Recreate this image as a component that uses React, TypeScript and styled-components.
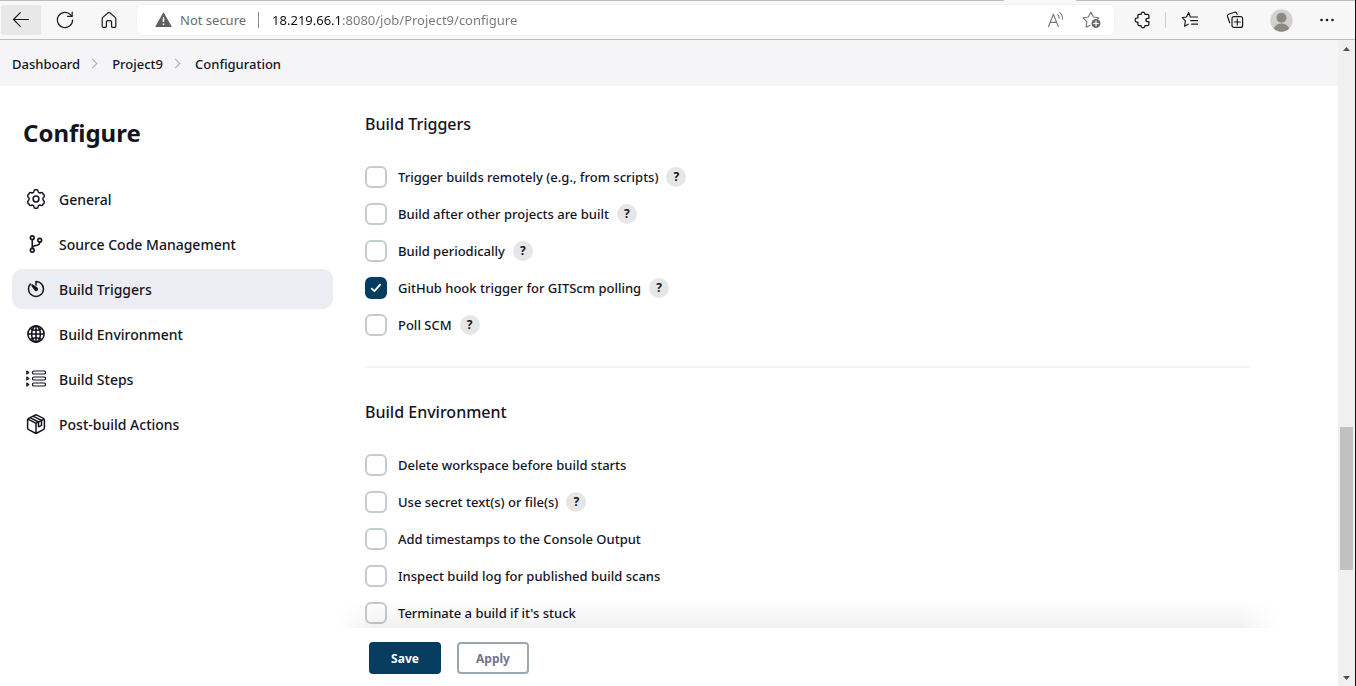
import React, { useState } from 'react';
import styled, { createGlobalStyle, css } from 'styled-components';
import { IoGitBranchOutline, IoGlobeOutline, IoTimerOutline } from 'react-icons/io5';

const ink = '#14141f';
const navy = '#063c5f';

const GlobalStyle = createGlobalStyle`
  *, *::before, *::after { box-sizing: border-box; }
  body { margin: 0; background: #fff; color: ${ink}; font-family: 'Noto Sans', 'Open Sans', sans-serif; }
  button, input { font-family: inherit; }
  h1, h2, ul, ol { margin: 0; padding: 0; }
  ul, ol { list-style: none; }
`;

const Window = styled.div`
  display: flex;
  flex-direction: column;
  height: 100vh;
  border-right: 1px solid #111;
  overflow: hidden;
`;

/* ---------- browser toolbar ---------- */

const TabEdge = styled.div`
  flex: none;
  display: flex;
  justify-content: flex-end;
  height: 1px;
  padding-right: 279px;
  background: #bdbdbd;
`;

const ActiveTab = styled.div`
  width: 72px;
  background: #f7f7f7;
`;

const Toolbar = styled.header`
  flex: none;
  display: flex;
  align-items: center;
  height: 39px;
  padding: 0 8px 0 1px;
  background: #f7f7f7;
  border-bottom: 1px solid #bdbdbd;
`;

const ToolGroup = styled.div<{ $gap: number }>`
  display: flex;
  align-items: center;
  gap: ${(p) => p.$gap}px;
`;

const ToolButton = styled.button<{ $active?: boolean; $narrow?: boolean }>`
  display: grid;
  place-items: center;
  width: ${(p) => (p.$narrow ? 36 : 40)}px;
  height: 30px;
  padding: 0;
  border: 0;
  border-radius: 3px;
  color: #1b1b1b;
  background: ${(p) => (p.$active ? '#e8e8e8' : 'transparent')};
  ${(p) => p.$narrow && css`color: #767676;`}
`;

const ToolDivider = styled.span`
  width: 1px;
  height: 16px;
  margin: 0 3px;
  background: #cfcfcf;
`;

const AddressBar = styled.div`
  flex: 1;
  display: flex;
  align-items: center;
  height: 30px;
  margin: 0 8px;
  padding: 0 4px 0 18px;
  border-radius: 5px;
  background: #fff;
  box-shadow: 0 0 2px rgba(0, 0, 0, 0.08);
`;

const Security = styled.span`
  margin-left: 8px;
  padding-right: 12px;
  border-right: 1px solid #8a8a8a;
  font-size: 13px;
  line-height: 16px;
  color: #6b6b6b;
`;

const Address = styled.input`
  flex: 1;
  min-width: 0;
  padding: 0 0 0 13px;
  border: 0;
  outline: 0;
  font-size: 13px;
  line-height: 20px;
  color: transparent;
  background: linear-gradient(90deg, #111 0 83px, #767676 83px);
  background-clip: text;
  -webkit-background-clip: text;
`;

/* ---------- page ---------- */

const Viewport = styled.div`
  flex: 1;
  display: flex;
  min-height: 0;
`;

const Page = styled.div`
  flex: 1;
  display: flex;
  flex-direction: column;
  min-width: 0;
`;

const Breadcrumbs = styled.nav`
  flex: none;
  padding: 0 12px;
  background: #f5f5f8;

  ol { display: flex; align-items: center; height: 46px; }
  li { display: flex; align-items: center; }
  li + li::before {
    content: '';
    width: 7px;
    height: 7px;
    margin: 0 16px 0 9px;
    border: solid #a9a9bb;
    border-width: 1px 1px 0 0;
    transform: rotate(45deg);
  }
`;

const Crumb = styled.a`
  padding-top: 2px;
  font-size: 13px;
  line-height: 20px;
  font-weight: 500;
  color: ${ink};
  text-decoration: none;
`;

const Body = styled.div`
  flex: 1;
  display: flex;
  min-height: 0;
`;

const Sidebar = styled.aside`
  flex: none;
  width: 333px;
  padding: 29px 0 0 12px;
`;

const Title = styled.h1`
  margin: 0 0 28px 11px;
  font-size: 24px;
  line-height: 36px;
  font-weight: 700;
`;

const Tasks = styled.ul`
  display: flex;
  flex-direction: column;
  gap: 5px;
`;

const Task = styled.a<{ $active?: boolean }>`
  display: flex;
  align-items: center;
  gap: 13px;
  height: 40px;
  padding-left: 14px;
  border-radius: 10px;
  font-size: 14px;
  line-height: 20px;
  font-weight: 500;
  color: ${ink};
  text-decoration: none;
  background: ${(p) => (p.$active ? '#ecedf3' : 'transparent')};

  svg[viewBox='0 0 512 512'] * { stroke-width: 40px; }
`;

const TaskName = styled.span`
  padding-top: 2px;
`;

const Main = styled.main`
  flex: 1;
  display: flex;
  flex-direction: column;
  min-width: 0;
  padding: 0 88px 0 32px;
`;

const FormArea = styled.div`
  flex: 1;
  min-height: 0;
  overflow: hidden;
`;

const Section = styled.section`
  padding: 25px 0 30px;
  & + & { border-top: 2px solid #f3f3f8; padding-top: 31px; }
`;

const SectionTitle = styled.h2`
  margin-bottom: 29px;
  font-size: 16px;
  line-height: 26px;
  font-weight: 500;
`;

const Options = styled.ul`
  display: flex;
  flex-direction: column;
  gap: 15px;
`;

const Option = styled.li`
  display: flex;
  align-items: center;
  gap: 8px;
  height: 22px;
`;

const OptionLabel = styled.label`
  display: flex;
  align-items: center;
  gap: 11px;
  font-size: 13px;
  line-height: 20px;
  font-weight: 500;
`;

const CheckCell = styled.span`
  display: grid;
  place-items: center;
  > * { grid-area: 1 / 1; }
  svg { pointer-events: none; }
`;

const Checkbox = styled.input`
  appearance: none;
  width: 22px;
  height: 22px;
  margin: 0;
  border: 2px solid #c3ccd1;
  border-radius: 6px;
  background: #fff;
  &:checked { border-color: ${navy}; background: ${navy}; }
`;

const Help = styled.button`
  width: 20px;
  height: 20px;
  padding: 0;
  border: 0;
  border-radius: 50%;
  font-size: 12px;
  line-height: 20px;
  font-weight: 700;
  color: ${ink};
  background: #e6e6e6;
`;

const ActionBar = styled.div`
  position: relative;
  flex: none;
  display: flex;
  gap: 16px;
  padding: 14px 4px 12px;
  background: #fff;

  &::before {
    content: '';
    position: absolute;
    left: -28px;
    right: -28px;
    bottom: 100%;
    height: 28px;
    background: linear-gradient(to top, rgba(0, 0, 0, 0.06), transparent);
    mask-image: linear-gradient(to right, transparent, #000 40px, #000 calc(100% - 40px), transparent);
    pointer-events: none;
  }
`;

const ActionButton = styled.button<{ $primary?: boolean }>`
  width: 72px;
  height: 32px;
  padding: 2px 0 0;
  border: 2px solid ${(p) => (p.$primary ? navy : '#9aa7b1')};
  border-radius: 4px;
  font-size: 12px;
  line-height: 20px;
  font-weight: 700;
  color: ${(p) => (p.$primary ? '#fff' : '#74748c')};
  background: ${(p) => (p.$primary ? navy : '#fff')};
`;

/* ---------- scrollbar ---------- */

const ScrollTrack = styled.div`
  flex: none;
  display: flex;
  flex-direction: column;
  align-items: center;
  width: 17px;
  background: #f0f0f0;
`;

const ScrollArrow = styled.button`
  display: grid;
  place-items: center;
  width: 17px;
  height: 17px;
  padding: 0;
  border: 0;
  background: transparent;
`;

const ScrollLane = styled.div`
  flex: 1;
  display: flex;
  flex-direction: column;
  width: 13px;
  &::before { content: ''; flex: 370; }
  &::after { content: ''; flex: 99; }
`;

const ScrollThumb = styled.div`
  flex: 143;
  background: #c1c1c1;
`;

/* ---------- icons ---------- */

const line = { fill: 'none', stroke: 'currentColor', strokeLinecap: 'round', strokeLinejoin: 'round' } as const;

const BackIcon = () => (
  <svg width="18" height="18" viewBox="0 0 18 18" {...line} strokeWidth="1.2"><path d="M16.500 8.500H1.500M8.300 1.700 1.500 8.500l6.800 6.800" /></svg>
);
const ReloadIcon = () => (
  <svg width="18" height="18" viewBox="0 0 18 18" {...line} strokeWidth="1.2"><path d="M16.600 9A7.600 7.600 0 1 1 14.600 3.800L16.200 5.400M16.200 1v4.400h-4.600" /></svg>
);
const HomeIcon = () => (
  <svg width="18" height="18" viewBox="0 0 18 18" {...line} strokeWidth="1.2">
    <path d="M2.200 7.600c0-.5.2-.9.6-1.200L8.200 1.700c.5-.4 1.100-.4 1.600 0l5.400 4.700c.4.300.6.700.6 1.200v7.600c0 .7-.5 1.200-1.200 1.200h-2.200c-.5 0-.8-.3-.8-.8V11c0-.9-.6-1.400-1.400-1.400H7.800c-.8 0-1.400.5-1.400 1.400v4.600c0 .5-.3.8-.8.8H3.400c-.7 0-1.200-.5-1.200-1.200z" />
  </svg>
);
const WarningIcon = () => (
  <svg width="17" height="16" viewBox="0 0 17 16">
    <path d="M8.500 1.200 15.900 14.400H1.100z" fill="#606060" stroke="#606060" strokeWidth="1.2" strokeLinejoin="round" />
    <path d="M8.500 5v5M8.500 11.400v1.600" stroke="#fff" strokeWidth="1.5" />
  </svg>
);
const ReadAloudIcon = () => (
  <svg width="18" height="18" viewBox="0 0 18 18" {...line} strokeWidth="1.1">
    <path d="M1.500 15.500 6.400 3.200l4.900 12.300M3.100 11.400h6.600M10.700 3.600c1 .9 1.500 2.200 1.400 3.600M12.800 1.600c1.900 1.600 2.900 4 2.700 6.600" />
  </svg>
);
const StarAddIcon = () => (
  <svg width="20" height="20" viewBox="0 0 20 20" {...line} strokeWidth="1.1">
    <path d="M8 15.200l-3.900 2 .8-5.500L1 7.800l5.400-.8L8.900 2l2.500 5 5.400.8-1.200 1.200" />
    <circle cx="14" cy="13.500" r="4.500" fill="#6b6b6b" stroke="none" />
    <path d="M14 11.200v4.600M11.700 13.500h4.600" stroke="#fff" strokeWidth="1.2" />
  </svg>
);
const PuzzleIcon = () => (
  <svg width="18" height="18" viewBox="0 0 18 18" {...line} strokeWidth="1.3">
    <path d="M6.200 3.400h1.900c-.1-1.300.7-2.200 1.900-2.200s2 .9 1.900 2.200h2.700c.8 0 1.300.5 1.300 1.300v2.600h-1c-1.200 0-2 .7-2 1.700s.8 1.700 2 1.700h1v2.600c0 .8-.5 1.300-1.300 1.300h-2.700c.1 1.300-.7 2.200-1.900 2.200s-2-.9-1.900-2.200H6.200c-.8 0-1.300-.5-1.300-1.300v-2.200C3.300 11.300 2.200 10.400 2.200 9s1.100-2.300 2.700-2.100V4.700c0-.8.5-1.300 1.300-1.300z" />
  </svg>
);
const FavoritesIcon = () => (
  <svg width="18" height="18" viewBox="0 0 18 18" {...line} strokeWidth="1.2">
    <path d="M11.700 6h-1.300L8.600 1.600 6.500 6l-4.300.7 3.200 3.200-.8 5.300 3.600-2M11.600 6h6M10.600 9.600h7M11.600 13.200h6" />
  </svg>
);
const CollectionsIcon = () => (
  <svg width="18" height="18" viewBox="0 0 18 18" {...line} strokeWidth="1.2">
    <path d="M3.700 11.800 1.500 5.500C1.200 4.500 1.600 3.600 2.600 3.200L8.400 1.300c1-.3 2 .1 2.300 1.100l.4 1" />
    <rect x="6" y="5.600" width="10.600" height="10.800" rx="2" />
    <path d="M11.300 8v6M8.300 11h6" />
  </svg>
);
const AvatarIcon = () => (
  <svg width="23" height="23" viewBox="0 0 23 23">
    <circle cx="11.500" cy="11.500" r="11.200" fill="#d3d1ce" />
    <circle cx="11.500" cy="8.800" r="5" fill="#8c8984" />
    <path d="M3.700 19.500a8.600 8.600 0 0 1 15.600 0 11.200 11.200 0 0 1-15.600 0" fill="#8c8984" />
  </svg>
);
const MoreIcon = () => (
  <svg width="16" height="4" viewBox="0 0 16 4" fill="currentColor"><circle cx="2.500" cy="2" r="1.300" /><circle cx="8" cy="2" r="1.300" /><circle cx="13.500" cy="2" r="1.300" /></svg>
);

const GearIcon = () => (
  <svg width="20" height="20" viewBox="0 0 20 20" {...line} strokeWidth="1.5">
    <circle cx="10" cy="10" r="2.900" />
    <path d="M7.900 2.300C8 1.300 8.500.8 9.300.8h1.400c.8 0 1.300.5 1.400 1.500.1 1.200 1.300 1.900 2.400 1.400 1-.4 1.800-.2 2.200.5l1.500 2.100c.4.700.2 1.400-.6 2-1 .7-1 2.700 0 3.400.8.600 1 1.300.6 2l-1.500 2.100c-.4.700-1.200.9-2.200.5-1.100-.5-2.300.2-2.400 1.400-.1 1-.6 1.500-1.400 1.500H9.300c-.8 0-1.300-.5-1.400-1.500-.1-1.200-1.300-1.900-2.400-1.400-1 .4-1.800.2-2.200-.5l-1.500-2.100c-.4-.7-.2-1.400.6-2 1-.7 1-2.700 0-3.400-.8-.6-1-1.300-.6-2l1.500-2.100c.4-.7 1.200-.9 2.200-.5 1.100.5 2.300-.2 2.400-1.400z" />
  </svg>
);
const StepsIcon = () => (
  <svg width="20" height="20" viewBox="0 0 20 20" {...line} strokeWidth="1.2">
    {[3.5, 9.5, 15.5].map((y) => (
      <g key={y}>
        <path d={`M.8 ${y - 1.5} 2.800 ${y} .8 ${y + 1.5}z`} />
        <rect x="6.500" y={y - 1.5} width="13" height="3" rx="1.300" />
      </g>
    ))}
  </svg>
);
const PackageIcon = () => (
  <svg width="20" height="20" viewBox="0 0 20 20" {...line} strokeWidth="1.5">
    <path d="M9.100 1.100a2 2 0 0 1 1.800 0l6.500 3.300c.6.300 1 .8 1 1.500v8.200c0 .7-.4 1.200-1 1.500l-6.500 3.400a2 2 0 0 1-1.800 0l-6.500-3.400c-.6-.3-1-.8-1-1.500V5.900c0-.7.4-1.200 1-1.500zM2 5.200l8 4.100 8-4.100M10 9.300v9.700" />
    <path d="M4.500 3.900l8 4.100v4.800l3-1.500V6.400l-8-4.100" />
  </svg>
);
const CheckIcon = () => (
  <svg width="12" height="12" viewBox="0 0 12 12" fill="none" stroke="#fff" strokeWidth="1.8" strokeLinecap="round" strokeLinejoin="round"><path d="M1.700 6.600 4.400 9.200 10.200 2.600" /></svg>
);

/* ---------- data ---------- */

const tasks = [
  { name: 'General', icon: <GearIcon /> },
  { name: 'Source Code Management', icon: <IoGitBranchOutline size={20} /> },
  { name: 'Build Triggers', icon: <IoTimerOutline size={20} />, active: true },
  { name: 'Build Environment', icon: <IoGlobeOutline size={20} /> },
  { name: 'Build Steps', icon: <StepsIcon /> },
  { name: 'Post-build Actions', icon: <PackageIcon /> },
];

type OptionData = { label: string; help?: boolean; checked?: boolean };

const sections: { title: string; options: OptionData[] }[] = [
  {
    title: 'Build Triggers',
    options: [
      { label: 'Trigger builds remotely (e.g., from scripts)', help: true },
      { label: 'Build after other projects are built', help: true },
      { label: 'Build periodically', help: true },
      { label: 'GitHub hook trigger for GITScm polling', help: true, checked: true },
      { label: 'Poll SCM', help: true },
    ],
  },
  {
    title: 'Build Environment',
    options: [
      { label: 'Delete workspace before build starts' },
      { label: 'Use secret text(s) or file(s)', help: true },
      { label: 'Add timestamps to the Console Output' },
      { label: 'Inspect build log for published build scans' },
      { label: "Terminate a build if it's stuck" },
    ],
  },
];

function OptionRow({ label, help, checked = false }: OptionData) {
  const [on, setOn] = useState(checked);
  return (
    <Option>
      <OptionLabel>
        <CheckCell>
          <Checkbox type="checkbox" checked={on} onChange={(e) => setOn(e.target.checked)} />
          {on && <CheckIcon />}
        </CheckCell>
        {label}
      </OptionLabel>
      {help && <Help type="button" aria-label={`Help for ${label}`}>?</Help>}
    </Option>
  );
}

export default function App() {
  return (
    <Window>
      <GlobalStyle />
      <TabEdge><ActiveTab /></TabEdge>
      <Toolbar>
        <ToolGroup $gap={4}>
          <ToolButton $active aria-label="Back"><BackIcon /></ToolButton>
          <ToolButton aria-label="Refresh"><ReloadIcon /></ToolButton>
          <ToolButton aria-label="Home"><HomeIcon /></ToolButton>
        </ToolGroup>
        <AddressBar>
          <WarningIcon />
          <Security>Not secure</Security>
          <Address aria-label="Address" defaultValue="18.219.66.1:8080/job/Project9/configure" />
          <ToolButton $narrow aria-label="Read aloud"><ReadAloudIcon /></ToolButton>
          <ToolButton $narrow aria-label="Add to favorites"><StarAddIcon /></ToolButton>
        </AddressBar>
        <ToolButton aria-label="Extensions"><PuzzleIcon /></ToolButton>
        <ToolDivider />
        <ToolGroup $gap={6}>
          <ToolButton aria-label="Favorites"><FavoritesIcon /></ToolButton>
          <ToolButton aria-label="Collections"><CollectionsIcon /></ToolButton>
          <ToolButton aria-label="Profile"><AvatarIcon /></ToolButton>
          <ToolButton aria-label="More"><MoreIcon /></ToolButton>
        </ToolGroup>
      </Toolbar>
      <Viewport>
        <Page>
          <Breadcrumbs aria-label="Breadcrumb">
            <ol>
              {['Dashboard', 'Project9', 'Configuration'].map((c) => (
                <li key={c}><Crumb href="#">{c}</Crumb></li>
              ))}
            </ol>
          </Breadcrumbs>
          <Body>
            <Sidebar>
              <Title>Configure</Title>
              <Tasks>
                {tasks.map((t) => (
                  <li key={t.name}><Task href="#" $active={t.active}>{t.icon}<TaskName>{t.name}</TaskName></Task></li>
                ))}
              </Tasks>
            </Sidebar>
            <Main>
              <FormArea>
                {sections.map((s) => (
                  <Section key={s.title}>
                    <SectionTitle>{s.title}</SectionTitle>
                    <Options>
                      {s.options.map((o) => <OptionRow key={o.label} {...o} />)}
                    </Options>
                  </Section>
                ))}
              </FormArea>
              <ActionBar>
                <ActionButton type="button" $primary>Save</ActionButton>
                <ActionButton type="button">Apply</ActionButton>
              </ActionBar>
            </Main>
          </Body>
        </Page>
        <ScrollTrack>
          <ScrollArrow aria-label="Scroll up"><svg width="7" height="4" viewBox="0 0 7 4"><path d="M0 4 3.500 0 7 4z" fill="#505050" /></svg></ScrollArrow>
          <ScrollLane><ScrollThumb /></ScrollLane>
          <ScrollArrow aria-label="Scroll down"><svg width="7" height="4" viewBox="0 0 7 4"><path d="M0 0 3.500 4 7 0z" fill="#505050" /></svg></ScrollArrow>
        </ScrollTrack>
      </Viewport>
    </Window>
  );
}
